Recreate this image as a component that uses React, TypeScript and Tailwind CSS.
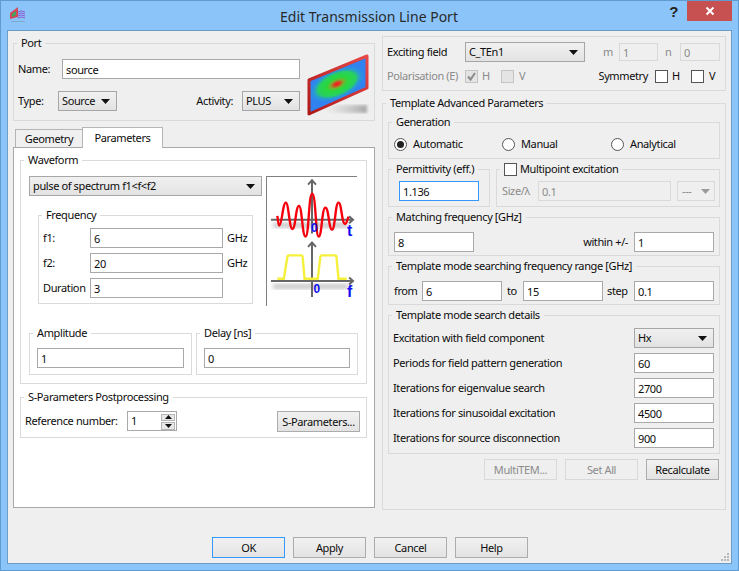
import type { ReactNode } from "react";

const Arrow = ({ muted = false }: { muted?: boolean }) => (
  <svg width="9" height="5" viewBox="0 0 9 5" className="shrink-0">
    <polygon points="0,0 9,0 4.5,5" fill={muted ? "#9a9a9a" : "#111"} />
  </svg>
);

const Group = ({
  title,
  className = "",
  bg = "bg-[#efefef]",
  children,
}: {
  title: ReactNode;
  className?: string;
  bg?: string;
  children?: ReactNode;
}) => (
  <div className={`relative border border-[#dadada] ${className}`}>
    <div className={`absolute -top-[9px] left-[3px] flex h-4 items-center whitespace-nowrap px-1 leading-4 ${bg}`}>
      {title}
    </div>
    {children}
  </div>
);

const Field = ({
  value,
  className = "",
  disabled = false,
}: {
  value: string;
  className?: string;
  disabled?: boolean;
}) => (
  <div
    className={`flex h-5 shrink-0 items-center border px-[3px] pt-px leading-4 ${
      disabled ? "border-[#d9d9d9] bg-[#efefef] text-[#8a8a8a]" : "border-[#a9a9a9] bg-white"
    } ${className}`}
  >
    {value}
  </div>
);

const Select = ({ value, className = "" }: { value: string; className?: string }) => (
  <div
    className={`flex h-5 shrink-0 items-center justify-between border border-[#a6a6a6] bg-gradient-to-b from-[#f1f1f1] to-[#e2e2e2] pl-[3px] pr-[6px] leading-4 ${className}`}
  >
    <span>{value}</span>
    <Arrow />
  </div>
);

const Btn = ({
  label,
  disabled = false,
  primary = false,
}: {
  label: string;
  disabled?: boolean;
  primary?: boolean;
}) => (
  <div
    className={`flex h-[21px] w-[73px] items-center justify-center border leading-4 ${
      disabled
        ? "border-[#d9d9d9] bg-[#efefef] text-[#8a8a8a]"
        : primary
          ? "border-[#3399ff] bg-gradient-to-b from-[#f1f1f1] to-[#e3e3e3]"
          : "border-[#acacac] bg-gradient-to-b from-[#f1f1f1] to-[#e3e3e3]"
    }`}
  >
    {label}
  </div>
);

const Check = ({ checked = false, disabled = false }: { checked?: boolean; disabled?: boolean }) => (
  <div
    className={`flex h-[13px] w-[13px] shrink-0 items-center justify-center border ${
      disabled ? "border-[#c4c4c4] bg-[#e4e4e4]" : "border-[#555] bg-white"
    }`}
  >
    {checked && (
      <svg width="11" height="11" viewBox="0 0 11 11">
        <path d="M2 5.5 L4.5 8.5 L9 2" fill="none" stroke="#8a8a8a" strokeWidth="2" />
      </svg>
    )}
  </div>
);

const Radio = ({ label, checked = false, className = "" }: { label: string; checked?: boolean; className?: string }) => (
  <div className={`flex items-center gap-[6px] ${className}`}>
    <div className="flex h-[13px] w-[13px] items-center justify-center rounded-full border border-[#555] bg-white">
      {checked && <div className="h-[7px] w-[7px] rounded-full bg-[#222]" />}
    </div>
    <span className="leading-4">{label}</span>
  </div>
);

const AppIcon = () => (
  <svg width="16" height="16" viewBox="0 0 16 16" className="shrink-0">
    <polygon points="0,6 8,0 8,10 0,12" fill="#d24a5a" />
    <polygon points="2,7 6,4 6,8 2,10" fill="#3aa85a" />
    <path d="M8 5 Q11 3 15 5 M8 7 Q11 5 15 7 M8 9 Q11 7 15 9 M8 11 Q11 9 15 11" fill="none" stroke="#8d5cd0" strokeWidth="1" />
    <rect x="1" y="14" width="14" height="1" fill="#7fa9cc" />
  </svg>
);

const PortImage = () => (
  <svg width="62" height="64" viewBox="0 0 62 64" className="mt-[9px] shrink-0 overflow-visible">
    <defs>
      <radialGradient id="spot" cx="0.5" cy="0.5" r="0.5">
        <stop offset="0" stopColor="#f01c1c" />
        <stop offset="0.08" stopColor="#e83020" />
        <stop offset="0.24" stopColor="#78b030" />
        <stop offset="0.38" stopColor="#28d83c" />
        <stop offset="0.66" stopColor="#28d060" />
        <stop offset="0.82" stopColor="#2a98d8" />
        <stop offset="1" stopColor="#2f82f0" />
      </radialGradient>
      <linearGradient id="shade" x1="0" x2="1" y1="0" y2="0">
        <stop offset="0" stopColor="#c8c8c8" stopOpacity="0" />
        <stop offset="1" stopColor="#a8a8a8" />
      </linearGradient>
      <linearGradient id="rim" x1="1" x2="0" y1="0" y2="1">
        <stop offset="0" stopColor="#e84848" />
        <stop offset="1" stopColor="#b01818" />
      </linearGradient>
      <filter id="soft">
        <feGaussianBlur stdDeviation="1.6" />
      </filter>
      <clipPath id="plate">
        <polygon points="2,27 60,3 60,35 2,61" />
      </clipPath>
    </defs>
    <rect x="16" y="52" width="44" height="8" fill="url(#shade)" filter="url(#soft)" />
    <polygon points="2,27 60,3 60,35 2,61" fill="#2f82f0" />
    <g clipPath="url(#plate)">
      <ellipse cx="30" cy="31" rx="30" ry="15" fill="url(#spot)" transform="rotate(-24 30 31)" />
    </g>
    <polygon points="2,27 60,3 60,35 2,61" fill="none" stroke="url(#rim)" strokeWidth="3" strokeLinejoin="round" />
  </svg>
);

const WaveImage = () => (
  <svg width="91" height="130" viewBox="0 0 91 130" className="shrink-0 border-l border-t border-[#808080]">
    <defs>
      <filter id="blur2">
        <feGaussianBlur stdDeviation="2" />
      </filter>
    </defs>
    <rect x="6" y="46" width="76" height="5" fill="#c4c4c4" filter="url(#blur2)" />
    <rect x="6" y="108" width="76" height="5" fill="#c4c4c4" filter="url(#blur2)" />
    <g fill="none" stroke="#666" strokeWidth="2">
      <path d="M4 43 H87 M83 39.5 L87 43 L83 46.5" />
      <path d="M45.5 57 V3 M41.5 7.5 L45.5 3 L49.5 7.5" />
      <path d="M4 105 H87 M83 101.5 L87 105 L83 108.5" />
      <path d="M45.5 121 V66 M41.5 70.5 L45.5 66 L49.5 70.5" />
    </g>
    <path
      d="M10.5 39 C11 44 11.5 49 12.3 49 C15 49 16 25.7 19 25.7 C22 25.7 22.5 52.3 25.7 52.3 C29 52.3 29 29 32.3 29 C35.5 29 35.5 60 39 60 C42.5 60 42 16.7 45.7 16.7 C49.5 16.7 49 60 52.3 60 C55.5 60 55.5 30.7 59 30.7 C62.5 30.7 62.5 53 65.7 53 C69 53 69 25.7 72.3 25.7 C75.5 25.7 75.5 47.3 79 47.3 C80.5 47.3 81.5 42 82.5 40"
      fill="none"
      stroke="#f5000c"
      strokeWidth="2.4"
    />
    <path
      d="M10.5 102.7 H17 L20.7 80 Q21 79 22 79 H34.5 Q35.7 79 36 80 L38 102.7 H51.3 L54 80 Q54.3 79 55.5 79 H69 Q70 79 70.2 80 L72.3 102.7 H80.7"
      fill="none"
      stroke="#f5f03a"
      strokeWidth="2.4"
    />
    <g fill="#1010f0" fontFamily="'Liberation Sans', sans-serif" fontWeight="700">
      <text x="44.5" y="55" fontSize="12">0</text>
      <text x="81" y="59" fontSize="16">t</text>
      <text x="47" y="117" fontSize="12">0</text>
      <text x="81" y="121" fontSize="16">f</text>
    </g>
  </svg>
);

const SizeGrip = () => (
  <svg width="10" height="10" viewBox="0 0 10 10" className="absolute bottom-[1px] right-[1px]">
    <g fill="#b8b8b8">
      <rect x="7" y="1" width="2" height="2" />
      <rect x="4" y="4" width="2" height="2" />
      <rect x="7" y="4" width="2" height="2" />
      <rect x="1" y="7" width="2" height="2" />
      <rect x="4" y="7" width="2" height="2" />
      <rect x="7" y="7" width="2" height="2" />
    </g>
  </svg>
);

const details = [
  ["Periods for field pattern generation", "60"],
  ["Iterations for eigenvalue search", "2700"],
  ["Iterations for sinusoidal excitation", "4500"],
  ["Iterations for source disconnection", "900"],
];

export default function App() {
  return (
    <div className="flex h-[571px] w-[739px] flex-col border border-[#5f9bd0] bg-[#8bc4f8] font-['Noto_Sans',sans-serif] text-[11px] tracking-[-0.38px] text-[#0c0c0c]">
      {/* Title bar */}
      <div className="flex h-[29px] shrink-0 items-start">
        <div className="flex h-full w-[200px] items-start pl-[9px] pt-[6px]">
          <AppIcon />
        </div>
        <div className="flex-1 pr-[1px] pt-[6px] text-center text-[14px] leading-5 tracking-normal text-[#2a2a2a]">Edit Transmission Line Port</div>
        <div className="flex w-[200px] items-start justify-end pr-[6px]">
          <span className="mr-[9px] pt-[1px] font-['Liberation_Sans',sans-serif] text-[15px] font-bold leading-5 text-[#222]">?</span>
          <div className="flex h-5 w-[45px] items-center justify-center bg-[#c75050]">
            <svg width="10" height="10" viewBox="0 0 10 10">
              <path d="M1.5 1.5 L8.5 8.5 M8.5 1.5 L1.5 8.5" stroke="#fff" strokeWidth="2" />
            </svg>
          </div>
        </div>
      </div>

      {/* Dialog body */}
      <div className="relative mx-[6px] flex h-[534px] flex-col border border-[#6a9cc6] bg-[#efefef]">
        <div className="flex h-[496px] gap-[7px] pl-[5px] pt-[5px]">
          {/* Left column */}
          <div className="w-[362px] pt-[7px]">
            <Group title="Port" className="flex h-[78px] gap-[7px] pl-[4px]">
              <div className="w-[282px] pt-[15px]">
                <div className="flex items-center">
                  <span className="w-[44px]">Name:</span>
                  <Field value="source" className="w-[238px]" />
                </div>
                <div className="mt-[12px] flex items-center">
                  <span className="w-[40px]">Type:</span>
                  <Select value="Source" className="w-[59px]" />
                  <span className="ml-auto mr-[9px]">Activity:</span>
                  <Select value="PLUS" className="w-[58px]" />
                </div>
              </div>
              <PortImage />
            </Group>

            {/* Tabs */}
            <div className="mt-[6px] flex items-end pl-[2px]">
              <div className="flex h-[18px] w-[67px] items-center justify-center border-l border-t border-[#b5b5b5] bg-[#f0f0f0] leading-4">Geometry</div>
              <div className="relative -mb-px flex h-[21px] w-[81px] items-center justify-center border border-b-0 border-[#b5b5b5] bg-white leading-4">Parameters</div>
            </div>

            <div className="h-[361px] border border-[#a8a8a8] bg-white pl-[6px] pt-[12px]">
              <Group title="Waveform" bg="bg-white" className="h-[224px] w-[347px] pl-[8px] pt-[15px]">
                <div className="flex gap-[4px]">
                  <div className="w-[233px]">
                    <Select value="pulse of spectrum f1<f<f2" />
                    <Group title="Frequency" bg="bg-white" className="ml-[9px] mt-[19px] h-[89px] w-[215px] pl-[4px] pt-[12px]">
                      <div className="flex flex-col gap-[5px]">
                        <div className="flex items-center">
                          <span className="w-[47px]">f1:</span>
                          <Field value="6" className="w-[133px]" />
                          <span className="ml-[4px]">GHz</span>
                        </div>
                        <div className="flex items-center">
                          <span className="w-[47px]">f2:</span>
                          <Field value="20" className="w-[133px]" />
                          <span className="ml-[4px]">GHz</span>
                        </div>
                        <div className="flex items-center">
                          <span className="w-[47px]">Duration</span>
                          <Field value="3" className="w-[133px]" />
                        </div>
                      </div>
                    </Group>
                  </div>
                  <WaveImage />
                </div>
                <div className="mt-[27px] flex gap-[4px]">
                  <Group title="Amplitude" bg="bg-white" className="h-[42px] w-[163px] px-[7px] pt-[14px]">
                    <Field value="1" />
                  </Group>
                  <Group title="Delay [ns]" bg="bg-white" className="h-[42px] w-[162px] px-[7px] pt-[14px]">
                    <Field value="0" />
                  </Group>
                </div>
              </Group>

              <Group
                title="S-Parameters Postprocessing"
                bg="bg-white"
                className="mt-[13px] flex h-[41px] w-[347px] items-start pl-[4px] pr-[6px] pt-[13px]"
              >
                <span className="w-[102px] leading-5">Reference number:</span>
                <div className="flex h-5 w-[50px] items-center justify-between border border-[#a9a9a9] pl-[3px] pr-px pt-px">
                  <span>1</span>
                  <div className="flex h-4 w-[14px] flex-col gap-px">
                    <div className="flex h-[7.5px] items-center justify-center border border-[#b5b5b5] bg-[#e8e8e8]">
                      <svg width="7" height="4" viewBox="0 0 7 4"><polygon points="0,4 7,4 3.5,0" fill="#111" /></svg>
                    </div>
                    <div className="flex h-[7.5px] items-center justify-center border border-[#b5b5b5] bg-[#e8e8e8]">
                      <svg width="7" height="4" viewBox="0 0 7 4"><polygon points="0,0 7,0 3.5,4" fill="#111" /></svg>
                    </div>
                  </div>
                </div>
                <div className="ml-auto flex h-[21px] w-[83px] items-center justify-center border border-[#acacac] bg-gradient-to-b from-[#f1f1f1] to-[#e3e3e3] leading-4">
                  S-Parameters...
                </div>
              </Group>
            </div>
          </div>

          {/* Right column */}
          <div className="w-[344px]">
            <div className="h-[55px] border border-[#dadada] pl-[4px] pr-[5px] pt-[5px]">
              <div className="flex items-center">
                <span className="w-[78px]">Exciting field</span>
                <Select value="C_TEn1" className="w-[120px]" />
                <span className="ml-[18px] w-[16px] text-[#8a8a8a]">m</span>
                <Field value="1" disabled className="h-[18px] w-[39px]" />
                <span className="ml-[7px] w-[15px] text-[#8a8a8a]">n</span>
                <Field value="0" disabled className="h-[18px] w-[40px]" />
              </div>
              <div className="mt-[6px] flex items-center">
                <span className="w-[78px] whitespace-nowrap text-[#8a8a8a]">Polarisation (E)</span>
                <Check checked disabled />
                <span className="ml-[4px] w-[19px] text-[#8a8a8a]">H</span>
                <Check disabled />
                <span className="ml-[5px] text-[#8a8a8a]">V</span>
                <span className="ml-auto mr-[7px]">Symmetry</span>
                <Check />
                <span className="ml-[4px] w-[19px]">H</span>
                <Check />
                <span className="ml-[5px] w-[11px]">V</span>
              </div>
            </div>

            <Group title="Template Advanced Parameters" className="mt-[12px] h-[407px] px-[5px] pt-[18px]">
              <Group title="Generation" className="flex h-[37px] items-center pl-[5px] pt-[7px]">
                <Radio label="Automatic" checked className="w-[108px]" />
                <Radio label="Manual" className="w-[109px]" />
                <Radio label="Analytical" />
              </Group>

              <div className="mt-[10px] flex gap-[6px]">
                <Group title="Permittivity (eff.)" className="h-[38px] w-[102px] pl-[10px] pt-[11px]">
                  <Field value="1.136" className="w-[80px] !border-[#3399ff]" />
                </Group>
                <Group
                  title={
                    <span className="flex items-center gap-[3px]">
                      <Check />
                      Multipoint excitation
                    </span>
                  }
                  className="h-[38px] w-[224px] pl-[5px] pt-[11px]"
                >
                  <div className="flex items-center">
                    <span className="w-[36px] text-[#8a8a8a]">Size/λ</span>
                    <Field value="0.1" disabled className="w-[133px]" />
                    <div className="ml-[6px] flex h-5 w-[38px] items-center justify-between border border-[#d9d9d9] px-[4px] text-[#8a8a8a]">
                      <span>---</span>
                      <Arrow muted />
                    </div>
                  </div>
                </Group>
              </div>

              <Group title="Matching frequency [GHz]" className="mt-[10px] flex h-[39px] items-center px-[5px] pt-[11px]">
                <Field value="8" className="w-[80px]" />
                <span className="ml-auto mr-[6px]">within +/-</span>
                <Field value="1" className="w-[80px]" />
              </Group>

              <Group title="Template mode searching frequency range [GHz]" className="mt-[10px] flex h-[39px] items-center px-[5px] pt-[11px]">
                <span className="w-[28px]">from</span>
                <Field value="6" className="w-[80px]" />
                <span className="w-[21px] pl-[5px]">to</span>
                <Field value="15" className="w-[80px]" />
                <span className="w-[31px] pl-[4px]">step</span>
                <Field value="0.1" className="w-[80px]" />
              </Group>

              <Group title="Template mode search details" className="mt-[10px] flex h-[139px] flex-col gap-[5px] pl-[4px] pr-[5px] pt-[12px]">
                <div className="flex items-center justify-between">
                  <span>Excitation with field component</span>
                  <Select value="Hx" className="w-[80px]" />
                </div>
                {details.map(([label, value]) => (
                  <div key={label} className="flex items-center justify-between">
                    <span>{label}</span>
                    <Field value={value} className="w-[80px]" />
                  </div>
                ))}
              </Group>

              <div className="mt-[5px] flex justify-end gap-[8px] pr-px">
                <Btn label="MultiTEM..." disabled />
                <Btn label="Set All" disabled />
                <Btn label="Recalculate" />
              </div>
            </Group>
          </div>
        </div>

        {/* Footer buttons */}
        <div className="mt-auto flex gap-[8px] pb-[5px] pl-[204px]">
          <Btn label="OK" primary />
          <Btn label="Apply" />
          <Btn label="Cancel" />
          <Btn label="Help" />
        </div>
        <SizeGrip />
      </div>
    </div>
  );
}
